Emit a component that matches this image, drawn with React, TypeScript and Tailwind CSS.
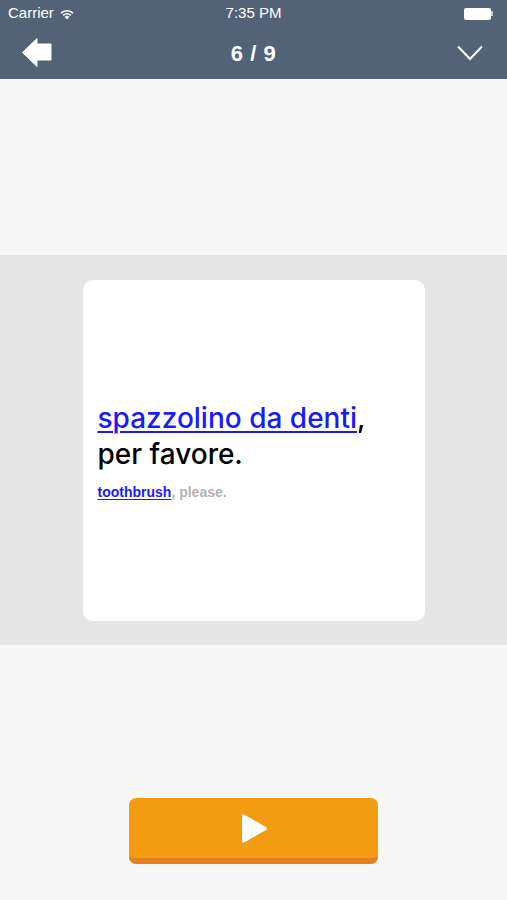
const font = { fontFamily: '"Liberation Sans", Arial, sans-serif' };
const cardFont = { fontFamily: 'Inter, "Liberation Sans", Arial, sans-serif' };

const WifiIcon = () => (
  <svg width="16" height="12" viewBox="0 0 16 12" fill="white">
    <path d="M8 11.5 L5.6 8.9 A3.6 3.6 0 0 1 10.4 8.9 Z" />
    <path d="M3.6 6.8 A6.4 6.4 0 0 1 12.4 6.8 L11.2 8 A4.7 4.7 0 0 0 4.8 8 Z" />
    <path d="M1.4 4.6 A9.4 9.4 0 0 1 14.6 4.6 L13.4 5.8 A7.7 7.7 0 0 0 2.6 5.8 Z" />
  </svg>
);

const App = () => {
  return (
    <div className="w-[507px] h-[900px] flex flex-col bg-[#f7f7f7] overflow-hidden" style={font}>
      {/* Header */}
      <div className="h-[79px] bg-[#536377] flex flex-col">
        <div className="h-[27px] flex items-center justify-between px-[8px] text-white text-[15px] relative">
          <div className="flex items-center gap-[5px]">
            <span>Carrier</span>
            <WifiIcon />
          </div>
          <span className="absolute left-1/2 -translate-x-1/2">7:35 PM</span>
          <div className="flex items-center pr-[6px]">
            <div className="w-[27px] h-[12px] bg-white rounded-[2px]" />
            <div className="w-[2px] h-[5px] bg-white/70 rounded-r-[1px]" />
          </div>
        </div>
        <div className="flex-1 flex items-center justify-between px-[22px] relative">
          <svg width="30" height="30" viewBox="0 0 30 30" fill="white">
            <path d="M0.5 14.5 L15 0.5 L15 6 L29 6 L29 22 L15 22 L15 28.5 Z" strokeLinejoin="round" stroke="white" strokeWidth="1" />
          </svg>
          <span className="absolute left-1/2 -translate-x-1/2 text-white font-bold text-[22px] tracking-[0.5px]">6 / 9</span>
          <svg width="26" height="16" viewBox="0 0 26 16" fill="none" stroke="white" strokeWidth="2" className="mr-[2px]">
            <path d="M1 1.5 L13 14 L25 1.5" />
          </svg>
        </div>
      </div>

      {/* Top spacer */}
      <div className="h-[176px] bg-[#f7f7f7]" />

      {/* Card band */}
      <div className="h-[390px] bg-[#e6e6e6] flex justify-center pt-[25px]">
        <div className="w-[342px] h-[341px] bg-white rounded-[10px] flex flex-col justify-center pl-[15px] pr-[8px] pt-[2px]">
          <p className="text-[28px] leading-[36px] font-medium text-black" style={cardFont}>
            <span className="text-[#1a1aff] underline underline-offset-[3px] decoration-[2px]">spazzolino da denti</span>,
            <br />
            per favore.
          </p>
          <p className="mt-[10px] text-[14px] font-bold text-[#b3b3b3]">
            <span className="text-[#1a1aff] underline underline-offset-[2px]">toothbrush</span>, please.
          </p>
        </div>
      </div>

      {/* Bottom */}
      <div className="flex-1 bg-[#f7f7f7] flex justify-center pt-[153px]">
        <button className="w-[249px] h-[66px] bg-[#f39c12] border-b-[6px] border-[#e67e22] rounded-[7px] flex items-center justify-center">
          <svg width="28" height="31" viewBox="0 0 28 31" fill="white">
            <path d="M2 2.5 Q2 0.5 4 1.6 L26 14 Q27.5 15.5 26 17 L4 29.4 Q2 30.5 2 28.5 Z" />
          </svg>
        </button>
      </div>
    </div>
  );
};

export default App;
